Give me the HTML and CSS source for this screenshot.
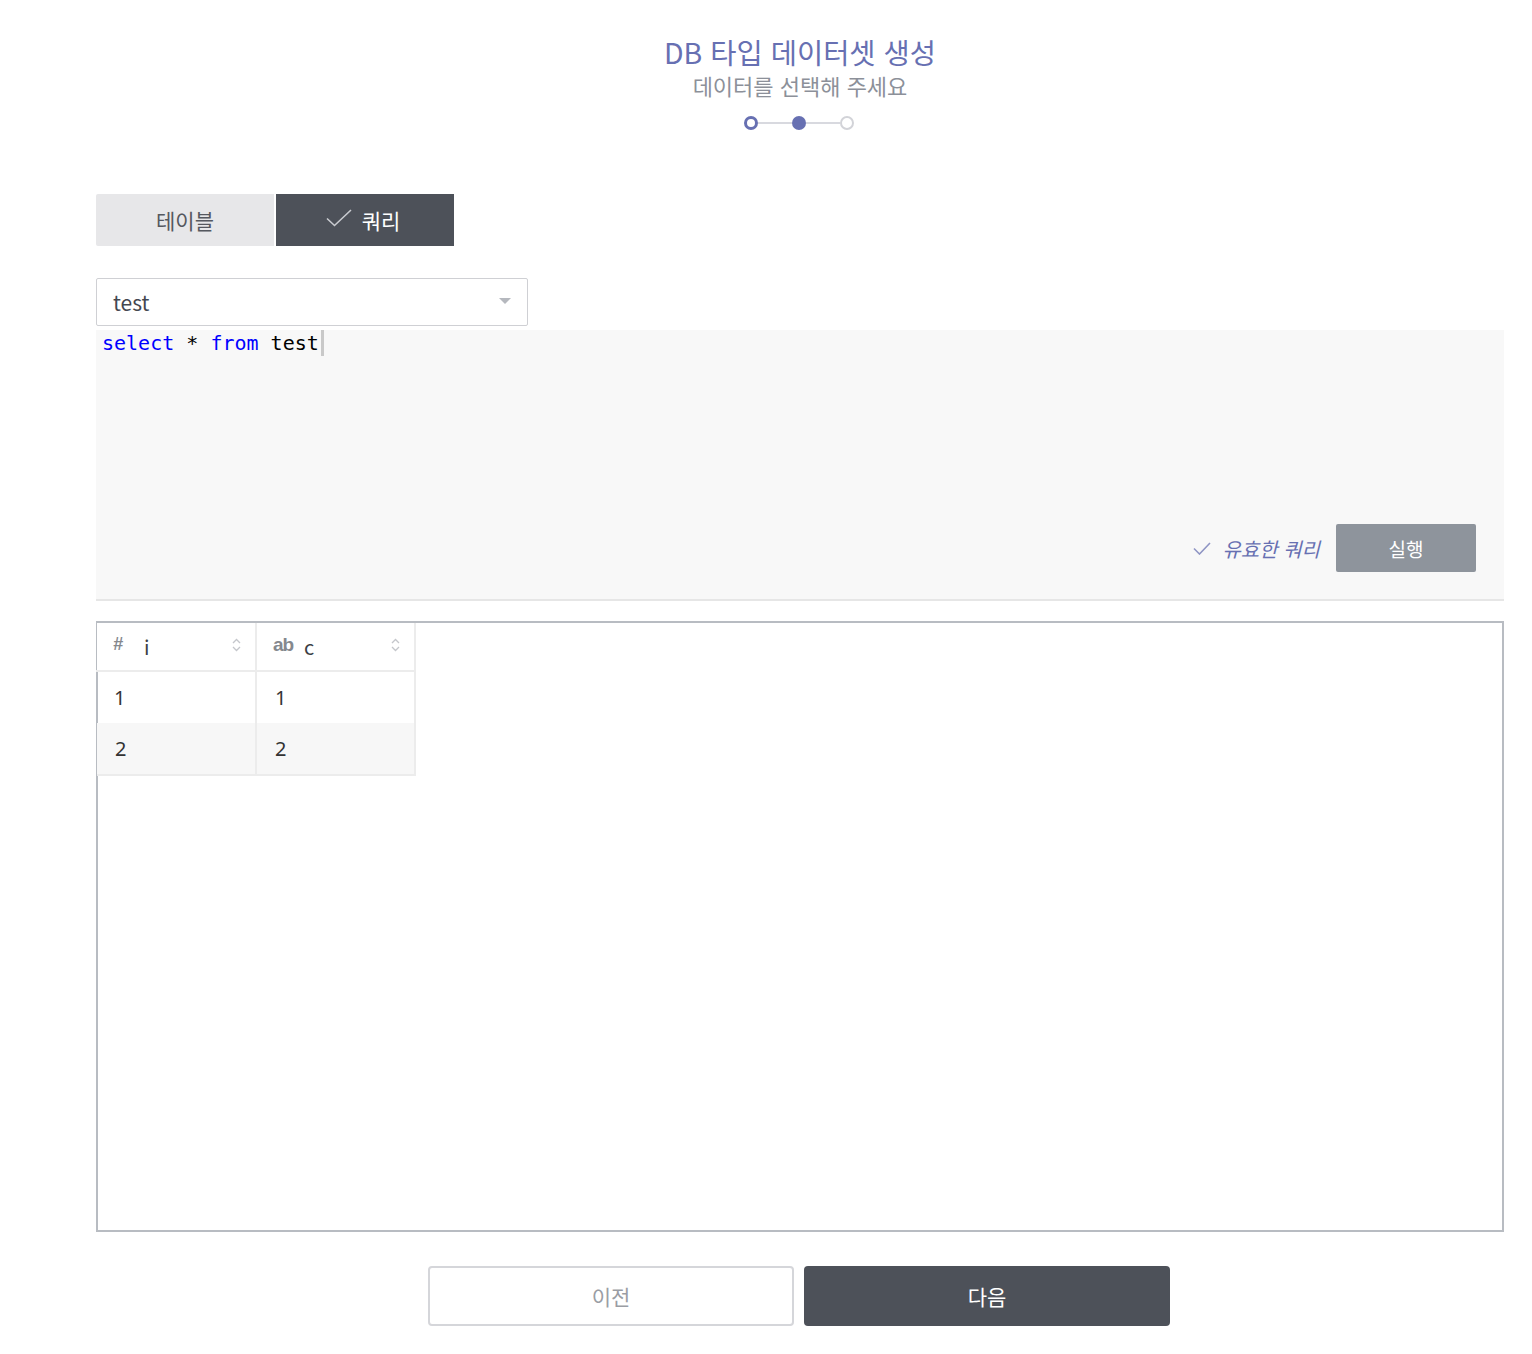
FILE: index.html
```html
<!DOCTYPE html>
<html lang="ko">
<head>
<meta charset="utf-8">
<title>DB 타입 데이터셋 생성</title>
<link rel="stylesheet" href="styles.css">
</head>
<body>
<div class="page">
  <header class="head">
    <h1 class="title">DB 타입 데이터셋 생성</h1>
    <p class="subtitle">데이터를 선택해 주세요</p>
    <div class="steps">
      <span class="dot dot-done"></span>
      <span class="line"></span>
      <span class="dot dot-active"></span>
      <span class="line"></span>
      <span class="dot dot-todo"></span>
    </div>
  </header>

  <div class="tabs">
    <button class="tab">테이블</button>
    <button class="tab tab-on">
      <svg class="tab-check" width="26" height="18" viewBox="0 0 26 18"><path d="M1 9.5 L8.5 16.5 L25 1" fill="none" stroke="#c9cbd0" stroke-width="1.6"/></svg>
      쿼리
    </button>
  </div>

  <div class="select">
    <span class="select-val">test</span>
    <svg class="caret" width="12" height="7" viewBox="0 0 12 7"><path d="M0 0 H12 L6 6 Z" fill="#b5b8be"/></svg>
  </div>

  <div class="editor">
    <div class="code"><span class="kw">select</span> * <span class="kw">from</span> test<span class="cursor"></span></div>
    <div class="editor-foot">
      <span class="valid">
        <svg class="valid-check" width="18" height="13" viewBox="0 0 18 13"><path d="M1 6.5 L6.5 12 L17 1" fill="none" stroke="#8f95c4" stroke-width="1.6"/></svg>
        유효한 쿼리
      </span>
      <button class="run">실행</button>
    </div>
  </div>

  <div class="result">
    <table class="grid">
      <thead>
        <tr>
          <th><span class="th-in"><span class="type type-num">#</span><span class="col">i</span><svg class="sort" width="9" height="14" viewBox="0 0 9 14"><path d="M1 5 L4.5 1.5 L8 5 M1 9 L4.5 12.5 L8 9" fill="none" stroke="#c4c6cb" stroke-width="1.3"/></svg></span></th>
          <th><span class="th-in"><span class="type type-str">ab</span><span class="col">c</span><svg class="sort" width="9" height="14" viewBox="0 0 9 14"><path d="M1 5 L4.5 1.5 L8 5 M1 9 L4.5 12.5 L8 9" fill="none" stroke="#c4c6cb" stroke-width="1.3"/></svg></span></th>
        </tr>
      </thead>
      <tbody>
        <tr><td>1</td><td>1</td></tr>
        <tr class="alt"><td>2</td><td>2</td></tr>
      </tbody>
    </table>
  </div>

  <div class="actions">
    <button class="btn btn-prev">이전</button>
    <button class="btn btn-next">다음</button>
  </div>
</div>
</body>
</html>
```

FILE: styles.css
```css
* { box-sizing: border-box; }
html, body { margin: 0; padding: 0; background: #fff; }
body {
  font-family: "Noto Sans CJK KR", "Noto Sans", sans-serif;
  color: #333;
}
.page {
  width: 1408px;
  margin-left: 96px;
  padding-top: 34px;
}
.head {
  display: flex;
  flex-direction: column;
  align-items: center;
}
.title {
  margin: 0;
  font-size: 28.5px;
  line-height: 36px;
  font-weight: 400;
  color: #6770b2;
}
.subtitle {
  margin: 1px 0 0;
  font-size: 22px;
  line-height: 28px;
  color: #8c9099;
}
.steps {
  display: flex;
  align-items: center;
  margin-top: 16px;
  height: 16px;
  margin-left: -2px;
}
.dot {
  width: 14px;
  height: 14px;
  border-radius: 50%;
  flex: none;
}
.dot-done { border: 3px solid #6770b2; background: #fff; }
.dot-active { background: #6770b2; }
.dot-todo { border: 2px solid #d2d3d8; background: #fff; }
.line {
  width: 34px;
  height: 2px;
  background: #d8d9df;
}
.tabs {
  display: flex;
  gap: 2px;
  margin-top: 63px;
}
.tab {
  width: 178px;
  height: 52px;
  border: 0;
  border-radius: 2px 0 0 2px;
  background: #e7e7e9;
  color: #55585f;
  font-family: inherit;
  font-size: 21px;
  display: flex;
  align-items: center;
  justify-content: center;
  padding: 0;
}
.tab-on {
  background: #4d5159;
  color: #fff;
  border-radius: 0;
  gap: 10px;
  padding-right: 4px;
}
.tab-check { margin-top: -4px; }
.select {
  margin-top: 32px;
  width: 432px;
  height: 48px;
  border: 1px solid #cfd0d4;
  border-radius: 2px;
  display: flex;
  align-items: center;
  justify-content: space-between;
  padding: 0 16px 0 16px;
}
.select-val {
  font-size: 21px;
  color: #444750;
}
.caret { margin-top: -2px; }
.editor {
  margin-top: 4px;
  height: 271px;
  background: #f8f8f8;
  border-bottom: 2px solid #e6e6e6;
  display: flex;
  flex-direction: column;
  justify-content: space-between;
}
.code {
  font-family: "DejaVu Sans Mono", "Liberation Mono", monospace;
  font-size: 20px;
  line-height: 26px;
  padding: 0 0 0 6px;
  color: #000;
  display: flex;
  align-items: center;
  white-space: pre;
}
.kw { color: #0000ff; }
.cursor {
  display: inline-block;
  width: 3px;
  height: 26px;
  background: #c9c9c9;
  margin-left: 2px;
}
.editor-foot {
  display: flex;
  justify-content: flex-end;
  align-items: center;
  gap: 16px;
  padding: 0 28px 27px 0;
}
.valid {
  display: flex;
  align-items: center;
  gap: 11px;
  font-size: 20px;
  font-style: italic;
  color: #6770b2;
}
.run {
  width: 140px;
  height: 48px;
  border: 0;
  border-radius: 2px;
  background: #8e949c;
  color: #fff;
  font-family: inherit;
  font-size: 19px;
}
.result {
  margin-top: 20px;
  height: 611px;
  border: 2px solid #b8bcc2;
}
.grid {
  border-collapse: collapse;
  font-size: 20px;
  color: #333;
  margin-left: -2px;
}
.grid th {
  width: 159px;
  height: 48px;
  padding: 0;
  background: #fff;
  border-right: 2px solid #ececec;
  border-bottom: 2px solid #ececec;
  font-weight: 400;
  text-align: left;
}
.th-in {
  display: flex;
  align-items: center;
  padding: 0 14px 0 16px;
}
.type {
  color: #85888e;
  font-family: "Liberation Sans", Arial, sans-serif;
  font-weight: 700;
}
.type-num { font-size: 18px; width: 31px; margin-top: -4px; font-style: italic; }
.type-str { font-size: 19px; letter-spacing: -1px; width: 31px; margin-top: -3px; }
.col { flex: 1; color: #3c3f45; }
.sort { flex: none; margin-top: -4px; }
.grid td {
  height: 52px;
  padding: 0 0 0 18px;
  border-right: 2px solid #ececec;
  border-bottom: 0;
  background: #fff;
  font-family: "Noto Sans", sans-serif;
}
.grid tr.alt td {
  background: #f7f7f7;
  border-bottom: 2px solid #ececec;
}
.grid tbody tr:first-child td:first-child { border-left: 2px solid #b8bcc2; padding-left: 16px; }
.actions {
  display: flex;
  justify-content: center;
  gap: 10px;
  margin-top: 34px;
  padding-right: 2px;
}
.btn {
  width: 366px;
  height: 60px;
  border-radius: 4px;
  font-family: inherit;
  font-size: 21px;
}
.btn-prev {
  background: #fff;
  border: 2px solid #d5d6da;
  color: #9a9da4;
}
.btn-next {
  background: #4d5159;
  border: 0;
  color: #fff;
}
```
